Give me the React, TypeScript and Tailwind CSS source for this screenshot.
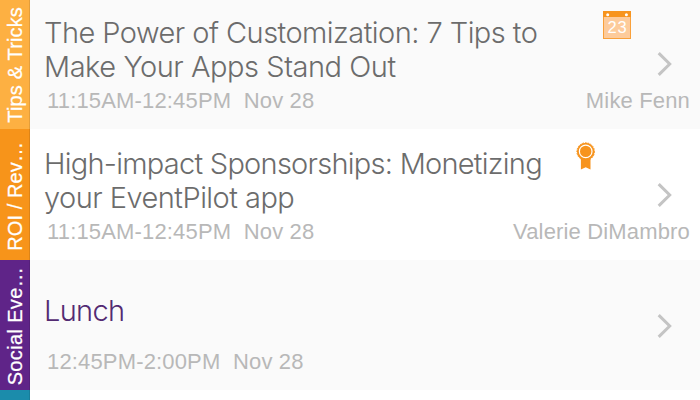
import type { ReactNode } from 'react';

type Session = {
  id: string;
  track: string;
  trackClass: string;
  trackLabelClass: string;
  rowClass: string;
  titleClass: string;
  chevronClass: string;
  lines: { text: string; className: string }[];
  time: string;
  date: string;
  speaker?: string;
  icon?: ReactNode;
};

function CalendarIcon() {
  return (
    <svg className="mt-[11px] ml-[43px] block h-7 w-7" viewBox="0 0 28 28" aria-hidden="true">
      <rect width="28" height="28" fill="#f9a03a" />
      <rect x="1" y="6" width="26" height="21" fill="#fdcb9b" />
      <rect width="28" height="6" fill="#f7941e" />
      <circle cx="4.7" cy="3.8" r="1.5" fill="#fff" />
      <circle cx="23.4" cy="3.8" r="1.5" fill="#fff" />
      <text
        x="14.4"
        y="22.4"
        textAnchor="middle"
        className="font-['Liberation_Sans',sans-serif]"
        fontSize="16.5"
        letterSpacing="0.8"
        fill="#fff"
      >
        23
      </text>
    </svg>
  );
}

function AwardIcon() {
  return (
    <svg className="mt-[13px] ml-4 block h-7 w-5" viewBox="0 0 20 28" aria-hidden="true">
      <path d="M4.9 15h9.6v12.6L9.7 25.2l-4.8 2.4z" fill="#f7941e" />
      <circle cx="9.7" cy="9.6" r="8.8" fill="#f7941e" stroke="#f7941e" strokeWidth="1" strokeDasharray="1.6 1.1" />
      <circle cx="9.7" cy="9.4" r="6.3" fill="none" stroke="#fff" strokeWidth="1.2" />
    </svg>
  );
}

function Chevron() {
  return (
    <svg className="block h-6 w-[15px]" viewBox="0 0 15 24" fill="none" aria-hidden="true">
      <path d="M1.7 1.1 12.7 12 1.7 22.9" stroke="#c4c4c4" strokeWidth="3" />
    </svg>
  );
}

const SESSIONS: Session[] = [
  {
    id: 'customization',
    track: 'Tips & Tricks',
    trackClass: 'bg-[#fdb042]',
    trackLabelClass: 'pt-[6px] tracking-[0.15px]',
    rowClass: 'h-[129px] bg-[#fafafa] pt-4',
    titleClass: 'text-[#6c6c6c]',
    chevronClass: 'top-[52px]',
    lines: [
      { text: 'The Power of Customization: 7 Tips to', className: 'tracking-[-0.54px]' },
      { text: 'Make Your Apps Stand Out', className: 'tracking-[-0.46px]' },
    ],
    time: '11:15AM-12:45PM',
    date: 'Nov 28',
    speaker: 'Mike Fenn',
    icon: <CalendarIcon />,
  },
  {
    id: 'sponsorships',
    track: 'ROI / Rev…',
    trackClass: 'bg-[#f7941a]',
    trackLabelClass: 'pt-[9px] tracking-[0.1px]',
    rowClass: 'h-[131px] bg-white pt-[18px]',
    titleClass: 'text-[#6c6c6c]',
    chevronClass: 'top-[54px]',
    lines: [
      { text: 'High-impact Sponsorships: Monetizing', className: 'tracking-[-0.74px]' },
      { text: 'your EventPilot app', className: 'tracking-[-0.53px]' },
    ],
    time: '11:15AM-12:45PM',
    date: 'Nov 28',
    speaker: 'Valerie DiMambro',
    icon: <AwardIcon />,
  },
  {
    id: 'lunch',
    track: 'Social Eve…',
    trackClass: 'bg-[#5f2488]',
    trackLabelClass: 'pt-[5px] tracking-[0.35px]',
    rowClass: 'h-[130px] bg-[#fafafa] pt-[34px]',
    titleClass: 'text-[#532a72]',
    chevronClass: 'top-[54px]',
    lines: [{ text: 'Lunch', className: 'tracking-[-0.7px]' }],
    time: '12:45PM-2:00PM',
    date: 'Nov 28',
  },
];

function SessionRow({ session }: { session: Session }) {
  return (
    <li className="flex">
      <div className={`flex w-[30px] shrink-0 items-end justify-center border-r border-black/10 ${session.trackClass}`}>
        <span
          className={`rotate-180 text-[20px] leading-7 whitespace-nowrap text-white [-webkit-text-stroke:0.25px_white] [writing-mode:vertical-rl] ${session.trackLabelClass}`}
        >
          {session.track}
        </span>
      </div>

      <div className={`flex min-w-0 flex-1 flex-col justify-between pl-[14px] ${session.rowClass}`}>
        <h3 className={`font-['Inter',sans-serif] text-[29px] leading-[34px] font-light ${session.titleClass}`}>
          {session.lines.map((line) => (
            <span key={line.text} className={`block whitespace-nowrap ${line.className}`}>
              {line.text}
            </span>
          ))}
        </h3>
        <div className="flex justify-between pr-[10px] pb-[15px] pl-[3px] text-[22px] leading-[26px] tracking-[0.16px] text-[#b8b8b8]">
          <p className="whitespace-pre">{`${session.time}  ${session.date}`}</p>
          {session.speaker && <p>{session.speaker}</p>}
        </div>
      </div>

      <div className="relative w-0">
        <div className="absolute top-0 -left-[140px]">{session.icon}</div>
        <div className={`absolute -left-[43px] ${session.chevronClass}`}>
          <Chevron />
        </div>
      </div>
    </li>
  );
}

export default function App() {
  return (
    <main className="h-[400px] w-[700px] overflow-hidden bg-white font-['Liberation_Sans',Arial,sans-serif]">
      <ul>
        {SESSIONS.map((session) => (
          <SessionRow key={session.id} session={session} />
        ))}
      </ul>
      <div className="h-[10px] w-[30px] border-r border-black/10 bg-[#1b8cab]" />
    </main>
  );
}
